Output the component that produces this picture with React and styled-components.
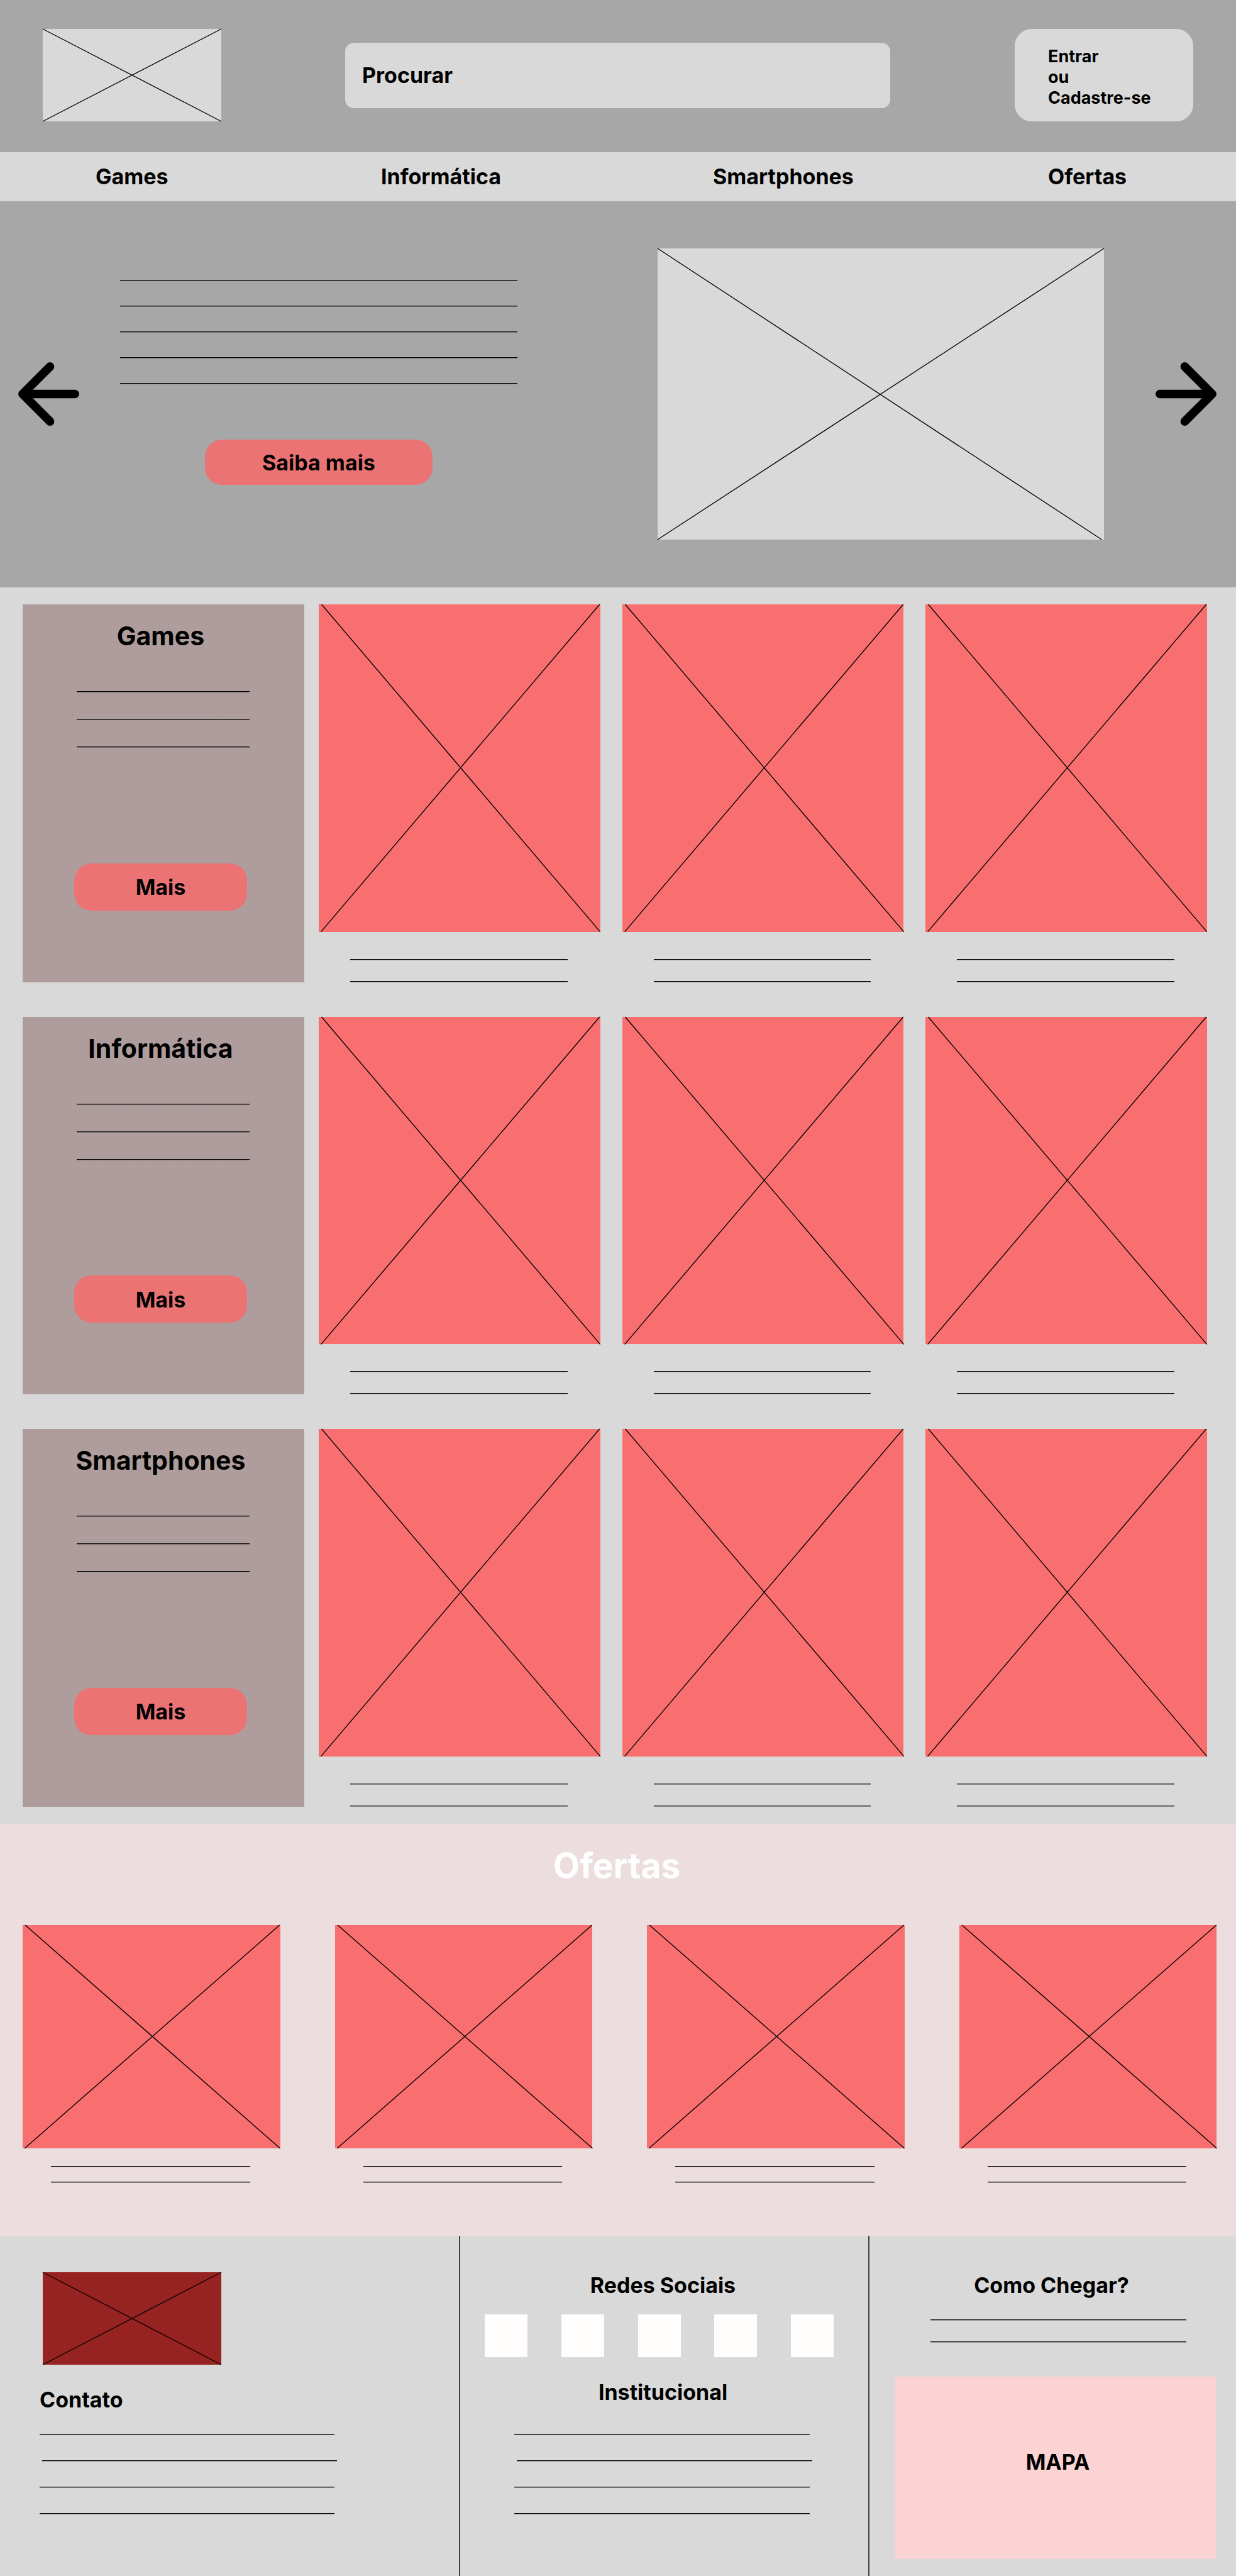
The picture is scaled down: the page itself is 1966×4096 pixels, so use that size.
import React from "react";
import styled, { createGlobalStyle } from "styled-components";

const GlobalStyle = createGlobalStyle`
  *, *::before, *::after { box-sizing: border-box; }
  body {
    margin: 0;
    background: #d9d9d9;
    color: #000;
    font-family: Inter, "Liberation Sans", sans-serif;
    font-size: 34px;
    font-weight: 700;
    line-height: 42px;
  }
  h1, h2, h3, p { margin: 0; font: inherit; }
  a { color: inherit; text-decoration: none; }
  button { font: inherit; color: inherit; border: 0; padding: 0; cursor: pointer; }
`;

/* ---------- shared parts ---------- */

const Frame = styled.div`
  flex: none;
  width: ${(p) => p.$width || "100%"};
  min-height: 0;
  aspect-ratio: ${(p) => p.$ratio};
  background: ${(p) => p.$color || "#f96e6e"};

  svg {
    display: block;
    width: 100%;
    height: 100%;
    overflow: visible;
  }
`;

const FALLING = { wide: [0, 0, 100, 100], card: [1, 0, 100, 100], hero: [0, 0, 99.5, 100] };
const RISING = { wide: [0, 100, 100, 0], card: [0.8, 100, 99.8, 0], hero: [0, 100, 100, 0] };

function Picture({ label, shape = "card", ...frame }) {
  const [ax, ay, bx, by] = FALLING[shape];
  const [cx, cy, dx, dy] = RISING[shape];
  return (
    <Frame {...frame}>
      <svg viewBox="0 0 100 100" preserveAspectRatio="none" role="img" aria-label={label}>
        <g stroke="#000" strokeWidth="1.36">
          <line x1={ax} y1={ay} x2={bx} y2={by} vectorEffect="non-scaling-stroke" />
          <line x1={cx} y1={cy} x2={dx} y2={dy} vectorEffect="non-scaling-stroke" />
        </g>
      </svg>
    </Frame>
  );
}

const Rule = styled.hr`
  width: 100%;
  height: 2px;
  margin: 0;
  border: 0;
  background: linear-gradient(#000 50%, rgba(0, 0, 0, 0.36) 50%);
`;

const Rules = styled.div`
  display: flex;
  flex-direction: column;
  gap: ${(p) => p.$gap};
  padding: ${(p) => p.$padding || 0};
`;

function TextLines({ count, as, ...rest }) {
  return (
    <Rules as={as} {...rest}>
      {Array.from({ length: count }, (_, i) => (
        <Rule key={i} />
      ))}
    </Rules>
  );
}

const PillButton = styled.button`
  height: ${(p) => p.$height};
  padding-top: 2px;
  border-radius: 27px;
  background: #eb7373;
`;

/* ---------- header ---------- */

const Header = styled.header`
  display: flex;
  align-items: center;
  padding: 46px 68px 49px;
  background: #a7a7a7;
`;

const SearchForm = styled.form`
  flex: 1;
  margin: 0 198px 0 197px;
`;

const SearchInput = styled.input`
  display: block;
  width: 100%;
  height: 104px;
  padding: 0 27px;
  border: 0;
  border-radius: 14px;
  background: #d9d9d9;
  font: inherit;
  color: #000;

  &::placeholder {
    color: #000;
    opacity: 1;
  }
`;

const Account = styled.div`
  display: flex;
  flex-direction: column;
  justify-content: center;
  align-items: flex-start;
  width: 284px;
  height: 147px;
  padding: 5px 0 0 53px;
  border-radius: 27px;
  background: #d9d9d9;
  font-size: 27px;
  line-height: 33px;
`;

const Nav = styled.nav`
  display: grid;
  grid-template-columns: 454fr 528fr 533fr 299fr;
  align-items: center;
  height: 78px;
  padding-left: 152px;
`;

/* ---------- hero ---------- */

const Hero = styled.section`
  display: flex;
  align-items: center;
  padding: 75px 31px 76px 29px;
  background: #a7a7a7;
`;

const HeroCopy = styled.div`
  flex: 632;
  display: flex;
  flex-direction: column;
  gap: 88px;
  align-self: flex-start;
  padding-top: 50px;
  margin: 0 223px 0 65px;

  button {
    align-self: center;
    width: 362px;
  }
`;

const HeroMedia = styled.div`
  flex: 710;
  margin-right: 82px;
`;

const ArrowButton = styled.button`
  flex: none;
  width: 97px;
  height: 101px;
  background: none;

  svg {
    display: block;
    width: 100%;
    height: 100%;
  }
`;

function Arrow({ label, d }) {
  return (
    <ArrowButton type="button" aria-label={label}>
      <svg viewBox="0 0 142 148" fill="none" stroke="#000" strokeWidth="20" strokeLinecap="round" strokeLinejoin="round">
        <path d={d} />
      </svg>
    </ArrowButton>
  );
}

/* ---------- departments ---------- */

const Departments = styled.div`
  display: flex;
  flex-direction: column;
  gap: 55px;
  padding: 27px 46px 27px 36px;
`;

const Department = styled.section`
  display: grid;
  grid-template-columns: 448fr 1413fr;
  gap: 23px;
`;

const Panel = styled.div`
  display: flex;
  flex-direction: column;
  padding: 25px 91px 114px 82px;
  background: #ae9d9c;
`;

const PanelTitle = styled.h2`
  margin: 0 -60px 63px;
  font-size: 41px;
  line-height: 50px;
  text-align: center;
`;

const PanelLines = styled(Rules)`
  margin: 0 -4px auto 4px;
`;

const Products = styled.div`
  display: grid;
  grid-template-columns: repeat(3, 1fr);
  gap: 35px;
`;

const Product = styled.article`
  display: flex;
  flex-direction: column;
  gap: ${(p) => p.$gap};
`;

/* ---------- offers ---------- */

const Offers = styled.section`
  padding: 33px 31px 84px 36px;
  background: #ecdede;
`;

const OffersTitle = styled.h2`
  margin-bottom: 62px;
  padding-right: 9px;
  color: #fff;
  font-size: 55px;
  line-height: 66px;
  text-align: center;
`;

const OfferGrid = styled.div`
  display: grid;
  grid-template-columns: repeat(4, 1fr);
  gap: 87px;
`;

/* ---------- footer ---------- */

const Footer = styled.footer`
  display: grid;
  grid-template-columns: 730fr 651fr 585fr;
`;

const FooterColumn = styled.div`
  display: flex;
  flex-direction: column;
  padding: ${(p) => p.$padding};

  & + & {
    border-left: 2px solid rgba(0, 0, 0, 0.7);
  }
`;

const FooterLogo = styled.div`
  padding-left: 5px;
  margin-bottom: 35px;
`;

const FooterTitle = styled.h3`
  text-align: ${(p) => p.$align || "center"};
  padding: ${(p) => p.$padding || 0};
  margin-bottom: ${(p) => p.$space};
`;

const StaggeredLines = styled(Rules)`
  ${Rule}:nth-child(2) {
    margin-left: 4px;
  }
`;

const SocialLinks = styled.div`
  display: flex;
  justify-content: space-between;
  margin-bottom: 35px;
`;

const SocialLink = styled.a`
  width: 68px;
  height: 68px;
  background: #fffcfc;
`;

const MapBox = styled.div`
  display: flex;
  align-items: center;
  justify-content: center;
  height: 290px;
  margin-top: 54px;
  padding: 0 0 18px 6px;
  background: #fbd3d3;
`;

const departments = ["Games", "Informática", "Smartphones"];
const social = ["Facebook", "Instagram", "Twitter", "YouTube", "LinkedIn"];

export default function App() {
  return (
    <>
      <GlobalStyle />
      <Header>
        <Picture label="Logo" shape="wide" $width="284px" $ratio="284 / 147" $color="#d9d9d9" />
        <SearchForm role="search">
          <SearchInput type="search" aria-label="Procurar" placeholder="Procurar" />
        </SearchForm>
        <Account>
          <a href="#entrar">Entrar</a>
          <span>ou</span>
          <a href="#cadastro">Cadastre-se</a>
        </Account>
      </Header>

      <Nav>
        {[...departments, "Ofertas"].map((name) => (
          <a key={name} href={`#${name}`}>{name}</a>
        ))}
      </Nav>

      <Hero>
        <Arrow label="Anterior" d="M74 10 L10 74 L74 138 M10 74 H132" />
        <HeroCopy>
          <TextLines count={5} $gap="39px" />
          <PillButton type="button" $height="72px">Saiba mais</PillButton>
        </HeroCopy>
        <HeroMedia>
          <Picture label="Destaque" shape="hero" $ratio="710 / 463" $color="#d9d9d9" />
        </HeroMedia>
        <Arrow label="Próximo" d="M68 10 L132 74 L68 138 M132 74 H10" />
      </Hero>

      <Departments>
        {departments.map((name) => (
          <Department key={name} id={name}>
            <Panel>
              <PanelTitle>{name}</PanelTitle>
              <TextLines as={PanelLines} count={3} $gap="42px" />
              <PillButton type="button" $height="75px">Mais</PillButton>
            </Panel>
            <Products>
              {[1, 2, 3].map((n) => (
                <Product key={n} $gap="43px">
                  <Picture label={`${name} ${n}`} $ratio="448 / 521" />
                  <TextLines count={2} $gap="33px" $padding="0 52px 0 50px" />
                </Product>
              ))}
            </Products>
          </Department>
        ))}
      </Departments>

      <Offers id="Ofertas">
        <OffersTitle>Ofertas</OffersTitle>
        <OfferGrid>
          {[1, 2, 3, 4].map((n) => (
            <Product key={n} $gap="28px">
              <Picture label={`Oferta ${n}`} $ratio="600 / 520" />
              <TextLines count={2} $gap="23px" $padding="0 48px 0 45px" />
            </Product>
          ))}
        </OfferGrid>
      </Offers>

      <Footer>
        <FooterColumn $padding="58px 198px 96px 63px">
          <FooterLogo>
            <Picture label="Logo" shape="wide" $width="284px" $ratio="284 / 147" $color="#962222" />
          </FooterLogo>
          <FooterTitle $align="left" $space="33px">Contato</FooterTitle>
          <TextLines as={StaggeredLines} count={4} $gap="40px" />
        </FooterColumn>
        <FooterColumn $padding="58px 55px 96px 39px">
          <FooterTitle $padding="0 0 0 12px" $space="25px">Redes Sociais</FooterTitle>
          <SocialLinks>
            {social.map((name) => (
              <SocialLink key={name} href={`#${name}`} aria-label={name} />
            ))}
          </SocialLinks>
          <FooterTitle $padding="0 0 0 12px" $space="45px">Institucional</FooterTitle>
          <TextLines as={StaggeredLines} count={4} $gap="40px" $padding="0 38px 0 47px" />
        </FooterColumn>
        <FooterColumn $padding="58px 31px 27px 41px">
          <FooterTitle $padding="0 14px 0 0" $space="33px">Como Chegar?</FooterTitle>
          <TextLines count={2} $gap="33px" $padding="0 48px 0 56px" />
          <MapBox>MAPA</MapBox>
        </FooterColumn>
      </Footer>
    </>
  );
}
